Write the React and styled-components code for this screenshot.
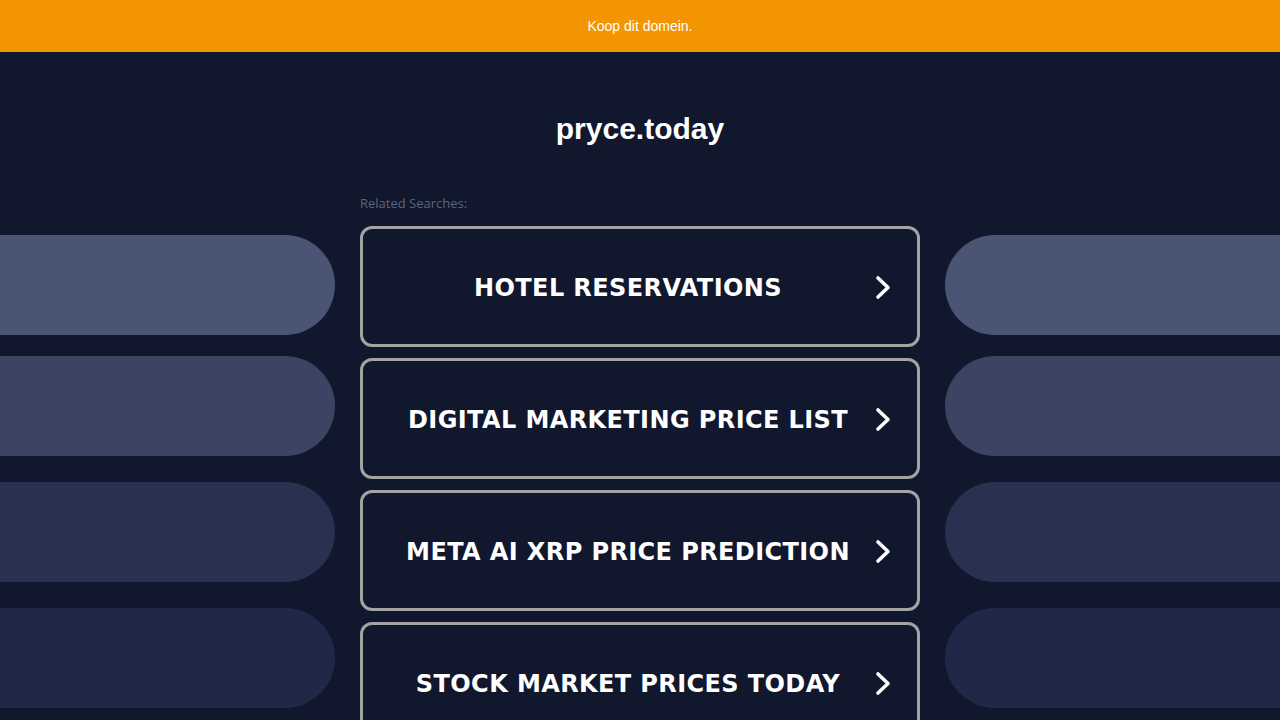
import React from "react";
import styled, { createGlobalStyle } from "styled-components";

const Global = createGlobalStyle`
  html, body { margin: 0; padding: 0; overflow: hidden; background: #11172d; }
  body { font-family: "Liberation Sans", Arial, sans-serif; }
`;

const Banner = styled.div`
  height: 52px;
  background: #f29500;
  color: #ffffff;
  font-size: 14px;
  display: flex;
  align-items: center;
  justify-content: center;
`;

const Main = styled.div`
  display: grid;
  grid-template-columns: 1fr 560px 1fr;
  column-gap: 25px;
  height: 668px;
  overflow: hidden;
`;

const Side = styled.div`
  display: flex;
  flex-direction: column;
  padding-top: 183px;
`;

const Pill = styled.div`
  height: 100px;
  flex-shrink: 0;
  margin-top: ${(p) => p.$top}px;
  background: ${(p) => p.$color};
  border-radius: ${(p) => (p.$side === "left" ? "0 50px 50px 0" : "50px 0 0 50px")};
`;

const Center = styled.div`
  display: flex;
  flex-direction: column;
`;

const Title = styled.h1`
  margin: 59px 0 0;
  font-size: 30px;
  line-height: 36px;
  font-weight: 700;
  color: #ffffff;
  text-align: center;
`;

const Label = styled.div`
  margin-top: 48px;
  font-family: "Open Sans", "Noto Sans", sans-serif;
  font-size: 13px;
  line-height: 16px;
  color: #5b6480;
`;

const List = styled.div`
  margin-top: 15px;
  display: flex;
  flex-direction: column;
  gap: 11px;
`;

const Card = styled.a`
  box-sizing: border-box;
  height: 121px;
  flex-shrink: 0;
  border: 3px solid #a3a3a3;
  border-radius: 12px;
  background: #11172d;
  display: flex;
  align-items: center;
  padding: 0 25px 0 29px;
  text-decoration: none;
  cursor: pointer;
`;

const CardText = styled.span`
  flex: 1;
  padding-top: 3px;
  text-align: center;
  font-family: "DejaVu Sans", Verdana, sans-serif;
  font-weight: 700;
  font-size: 24px;
  color: #ffffff;
  letter-spacing: 0.4px;
`;

const Chevron = styled.svg`
  width: 18px;
  height: 26px;
  margin-left: 10px;
  flex-shrink: 0;
`;

const pills = [
  { top: 0, color: "#4a5573" },
  { top: 21, color: "#3b4563" },
  { top: 26, color: "#283150" },
  { top: 26, color: "#1f2847" },
];

const items = [
  "HOTEL RESERVATIONS",
  "DIGITAL MARKETING PRICE LIST",
  "META AI XRP PRICE PREDICTION",
  "STOCK MARKET PRICES TODAY",
];

function SideColumn({ side }) {
  return (
    <Side>
      {pills.map((p, i) => (
        <Pill key={i} $top={p.top} $color={p.color} $side={side} />
      ))}
    </Side>
  );
}

export default function App() {
  return (
    <>
      <Global />
      <Banner>Koop dit domein.</Banner>
      <Main>
        <SideColumn side="left" />
        <Center>
          <Title>pryce.today</Title>
          <Label>Related Searches:</Label>
          <List>
            {items.map((t) => (
              <Card key={t}>
                <CardText>{t}</CardText>
                <Chevron viewBox="0 0 18 26">
                  <polyline
                    points="4,4 14,13.5 4,23"
                    fill="none"
                    stroke="#ffffff"
                    strokeWidth="3.6"
                    strokeLinecap="round"
                    strokeLinejoin="round"
                  />
                </Chevron>
              </Card>
            ))}
          </List>
        </Center>
        <SideColumn side="right" />
      </Main>
    </>
  );
}
